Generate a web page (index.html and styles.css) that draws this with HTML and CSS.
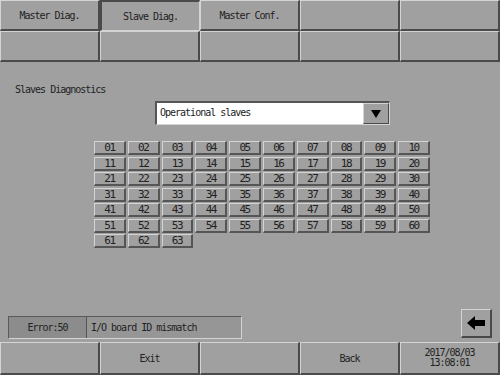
FILE: index.html
```html
<!DOCTYPE html>
<html lang="en">

<head>
    <meta charset="UTF-8">
    <meta name="viewport" content="width=device-width, initial-scale=1.0">
    <title>Slave Diag.</title>
    <link rel="stylesheet" href="styles.css">
</head>

<body>
    <div class="screen">
        <nav class="tabs">
            <button class="key">Master Diag.</button>
            <button class="key key-down">Slave Diag.</button>
            <button class="key">Master Conf.</button>
            <button class="key"></button>
            <button class="key"></button>
            <button class="key"></button>
            <button class="key"></button>
            <button class="key"></button>
            <button class="key"></button>
            <button class="key"></button>
        </nav>

        <h1 class="title">Slaves Diagnostics</h1>

        <div class="select">
            <span class="select-value">Operational slaves</span>
            <span class="select-btn">
                <svg width="10" height="8" viewBox="0 0 10 8">
                    <path d="M0 0 H10 L5 8 Z" fill="#000" />
                </svg>
            </span>
        </div>

        <div class="slaves">
            <span class="cell">01</span><span class="cell">02</span><span class="cell">03</span><span class="cell">04</span><span class="cell">05</span>
            <span class="cell">06</span><span class="cell">07</span><span class="cell">08</span><span class="cell">09</span><span class="cell">10</span>
            <span class="cell">11</span><span class="cell">12</span><span class="cell">13</span><span class="cell">14</span><span class="cell">15</span>
            <span class="cell">16</span><span class="cell">17</span><span class="cell">18</span><span class="cell">19</span><span class="cell">20</span>
            <span class="cell">21</span><span class="cell">22</span><span class="cell">23</span><span class="cell">24</span><span class="cell">25</span>
            <span class="cell">26</span><span class="cell">27</span><span class="cell">28</span><span class="cell">29</span><span class="cell">30</span>
            <span class="cell">31</span><span class="cell">32</span><span class="cell">33</span><span class="cell">34</span><span class="cell">35</span>
            <span class="cell">36</span><span class="cell">37</span><span class="cell">38</span><span class="cell">39</span><span class="cell">40</span>
            <span class="cell">41</span><span class="cell">42</span><span class="cell">43</span><span class="cell">44</span><span class="cell">45</span>
            <span class="cell">46</span><span class="cell">47</span><span class="cell">48</span><span class="cell">49</span><span class="cell">50</span>
            <span class="cell">51</span><span class="cell">52</span><span class="cell">53</span><span class="cell">54</span><span class="cell">55</span>
            <span class="cell">56</span><span class="cell">57</span><span class="cell">58</span><span class="cell">59</span><span class="cell">60</span>
            <span class="cell">61</span><span class="cell">62</span><span class="cell">63</span>
        </div>

        <div class="status">
            <div class="error">
                <span class="error-code">Error:50</span>
                <span class="error-text">I/O board ID mismatch</span>
            </div>
            <button class="key arrow-btn">
                <svg width="18" height="14" viewBox="0 0 18 14">
                    <path d="M0 7 L8 0 V4 H18 V10 H8 V14 Z" fill="#000" />
                </svg>
            </button>
        </div>

        <footer class="bottom">
            <button class="key"></button>
            <button class="key">Exit</button>
            <button class="key"></button>
            <button class="key">Back</button>
            <button class="key key-date">2017/08/03<br>13:08:01</button>
        </footer>
    </div>
</body>

</html>
```

FILE: styles.css
```css
* {
    box-sizing: border-box;
    margin: 0;
    padding: 0;
}

body {
    background-color: #a0a0a0;
    font-family: 'DejaVu Sans Mono', monospace;
    font-size: 10px;
    letter-spacing: -1px;
    color: #222;
}

.screen {
    width: 500px;
    height: 375px;
    display: flex;
    flex-direction: column;
    overflow: hidden;
}

.key {
    background-color: #a0a0a0;
    border-style: solid;
    border-width: 1px 2px 2px 1px;
    border-color: #d4d4d4 #4a4a4a #4a4a4a #d4d4d4;
    font-family: inherit;
    font-size: 10px;
    letter-spacing: -1px;
    color: #222;
    display: flex;
    align-items: center;
    justify-content: center;
    text-align: center;
}

.key-down {
    border-color: #4a4a4a #d4d4d4 #d4d4d4 #4a4a4a;
    border-width: 2px 1px 1px 2px;
}

.tabs {
    display: grid;
    grid-template-columns: repeat(5, 100px);
    grid-template-rows: 31px 31px;
}

.title {
    font-size: 10px;
    font-weight: normal;
    line-height: 12px;
    margin-top: 22px;
    padding-left: 15px;
}

.select {
    display: flex;
    width: 235px;
    height: 24px;
    margin: 5px 0 0 155px;
    border-style: solid;
    border-width: 2px 1px 1px 2px;
    border-color: #555 #d4d4d4 #d4d4d4 #555;
}

.select-value {
    flex: 1;
    background-color: #fff;
    line-height: 20px;
    padding-left: 3px;
}

.select-btn {
    width: 26px;
    display: flex;
    align-items: center;
    justify-content: center;
    background-color: #a0a0a0;
    border-style: solid;
    border-width: 1px;
    border-color: #d4d4d4 #4a4a4a #4a4a4a #d4d4d4;
}

.slaves {
    display: grid;
    grid-template-columns: repeat(10, 31.8px);
    grid-auto-rows: 14px;
    column-gap: 2px;
    row-gap: 1.5px;
    margin: 16px 0 0 94px;
}

.cell {
    display: flex;
    align-items: center;
    justify-content: center;
    border-style: solid;
    border-width: 1px 2px 2px 1px;
    border-color: #d4d4d4 #555 #555 #d4d4d4;
    background-color: #a0a0a0;
    font-size: 11px;
    letter-spacing: -1.5px;
    line-height: 1;
}

.status {
    margin-top: auto;
    height: 31px;
    display: flex;
    align-items: center;
    padding: 0 8px;
    justify-content: space-between;
}

.error {
    display: flex;
    width: 234px;
    height: 23px;
    margin-top: 8px;
    border-style: solid;
    border-width: 1px;
    border-color: #5a5a5a #d4d4d4 #d4d4d4 #5a5a5a;
}

.error-code {
    width: 78px;
    background-color: #8c8c8c;
    border-right: 1px solid #555;
    display: flex;
    align-items: center;
    justify-content: center;
}

.error-text {
    flex: 1;
    background-color: #969696;
    display: flex;
    align-items: center;
    padding-left: 4px;
}

.arrow-btn {
    width: 31px;
    height: 29px;
    margin-top: -1px;
}

.bottom {
    display: grid;
    grid-template-columns: repeat(5, 100px);
    height: 33px;
    margin-top: 3px;
}

.key-date {
    line-height: 10px;
    font-size: 10px;
}
```
